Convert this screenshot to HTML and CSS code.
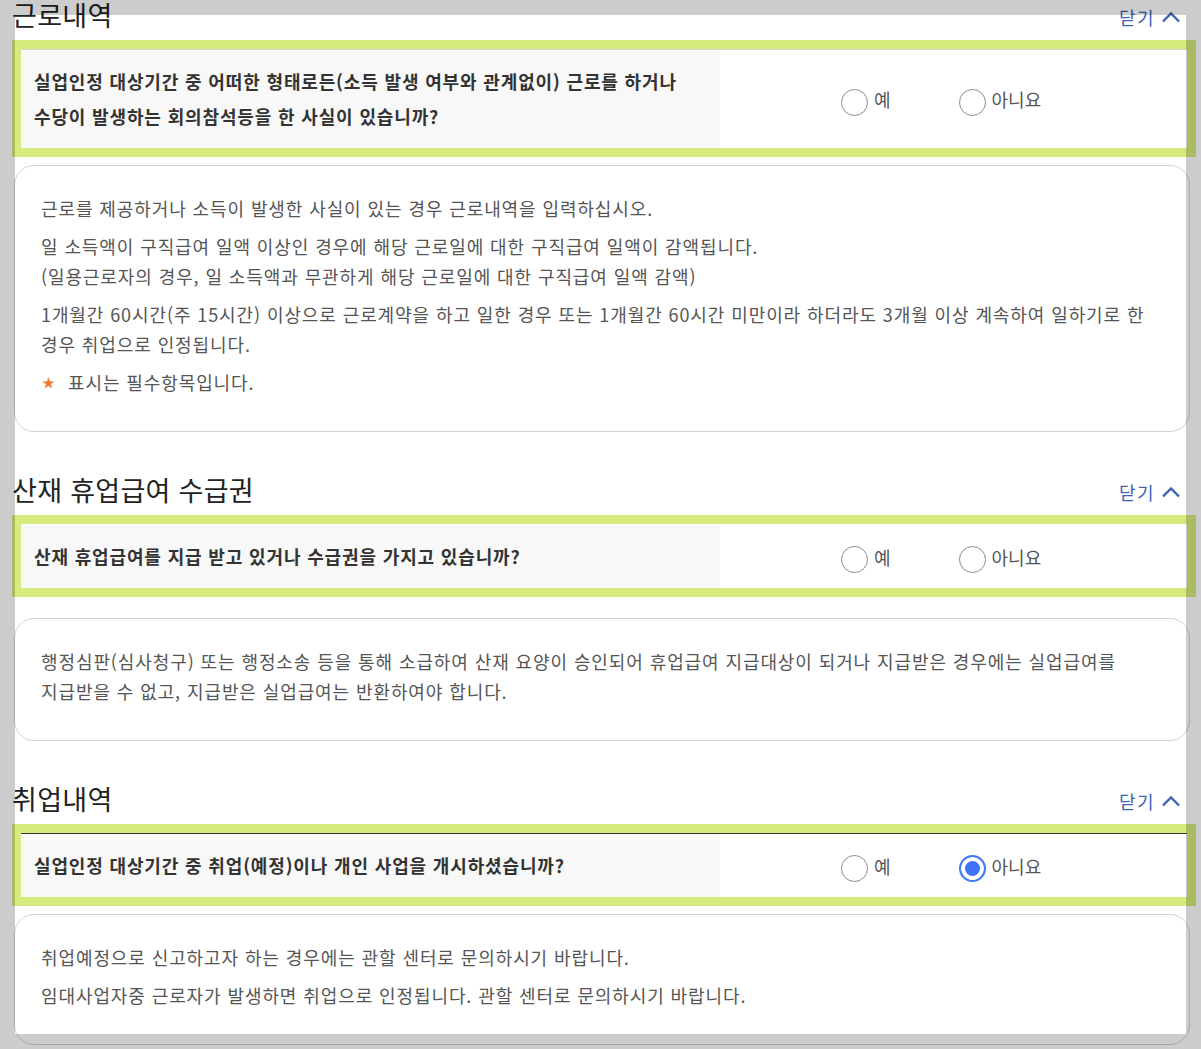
FILE: index.html
```html
<!DOCTYPE html>
<html lang="ko">
<head>
    <meta charset="UTF-8">
    <meta name="viewport" content="width=device-width, initial-scale=1.0">
    <title>실업인정 신청 - 근로내역</title>
    <link rel="stylesheet" href="styles.css">
</head>
<body>
    <div class="page">
        <section class="block">
            <div class="block-head">
                <h2 class="block-title">근로내역</h2>
                <button class="toggle" type="button">닫기
                    <svg class="toggle-icon" viewBox="0 0 20 12" width="20" height="12"><polyline points="2,10.5 10,2.5 18,10.5" /></svg>
                </button>
            </div>
            <div class="question question--line">
                <div class="question-text">실업인정 대상기간 중 어떠한 형태로든(소득 발생 여부와 관계없이) 근로를 하거나<br>수당이 발생하는 회의참석등을 한 사실이 있습니까?</div>
                <div class="question-answer">
                    <label class="radio"><input type="radio" name="work"><span>예</span></label>
                    <label class="radio"><input type="radio" name="work"><span>아니요</span></label>
                </div>
            </div>
            <div class="notice">
                <p>근로를 제공하거나 소득이 발생한 사실이 있는 경우 근로내역을 입력하십시오.</p>
                <p>일 소득액이 구직급여 일액 이상인 경우에 해당 근로일에 대한 구직급여 일액이 감액됩니다.<br>(일용근로자의 경우, 일 소득액과 무관하게 해당 근로일에 대한 구직급여 일액 감액)</p>
                <p>1개월간 60시간(주 15시간) 이상으로 근로계약을 하고 일한 경우 또는 1개월간 60시간 미만이라 하더라도 3개월 이상 계속하여 일하기로 한<br>경우 취업으로 인정됩니다.</p>
                <p><span class="star">★</span>표시는 필수항목입니다.</p>
            </div>
        </section>

        <section class="block">
            <div class="block-head">
                <h2 class="block-title">산재 휴업급여 수급권</h2>
                <button class="toggle" type="button">닫기
                    <svg class="toggle-icon" viewBox="0 0 20 12" width="20" height="12"><polyline points="2,10.5 10,2.5 18,10.5" /></svg>
                </button>
            </div>
            <div class="question question--wide-gap">
                <div class="question-text">산재 휴업급여를 지급 받고 있거나 수급권을 가지고 있습니까?</div>
                <div class="question-answer">
                    <label class="radio"><input type="radio" name="injury"><span>예</span></label>
                    <label class="radio"><input type="radio" name="injury"><span>아니요</span></label>
                </div>
            </div>
            <div class="notice">
                <p>행정심판(심사청구) 또는 행정소송 등을 통해 소급하여 산재 요양이 승인되어 휴업급여 지급대상이 되거나 지급받은 경우에는 실업급여를<br>지급받을 수 없고, 지급받은 실업급여는 반환하여야 합니다.</p>
            </div>
        </section>

        <section class="block">
            <div class="block-head">
                <h2 class="block-title">취업내역</h2>
                <button class="toggle" type="button">닫기
                    <svg class="toggle-icon" viewBox="0 0 20 12" width="20" height="12"><polyline points="2,10.5 10,2.5 18,10.5" /></svg>
                </button>
            </div>
            <div class="question question--dark">
                <div class="question-text">실업인정 대상기간 중 취업(예정)이나 개인 사업을 개시하셨습니까?</div>
                <div class="question-answer">
                    <label class="radio"><input type="radio" name="job"><span>예</span></label>
                    <label class="radio"><input type="radio" name="job" checked><span>아니요</span></label>
                </div>
            </div>
            <div class="notice">
                <p>취업예정으로 신고하고자 하는 경우에는 관할 센터로 문의하시기 바랍니다.</p>
                <p>임대사업자중 근로자가 발생하면 취업으로 인정됩니다. 관할 센터로 문의하시기 바랍니다.</p>
            </div>
        </section>
    </div>

    <div class="dim"></div>
</body>
</html>
```

FILE: styles.css
```css
html, body {
    margin: 0;
    height: 100%;
    overflow: hidden;
}

body {
    font-family: 'Noto Sans CJK KR', 'Noto Sans', sans-serif;
    background: #fff;
    color: #333;
}

.page {
    padding: 0 11px 0 14px;
}

.block + .block {
    margin-top: 43px;
}

.block-head {
    display: flex;
    justify-content: space-between;
    align-items: center;
    height: 30px;
    margin-bottom: 19px;
}

.block-title {
    margin: -1px 0 0 -2px;
    font-size: 27px;
    font-weight: 400;
    letter-spacing: 0.3px;
    line-height: 30px;
    color: #222;
}

.toggle {
    display: flex;
    align-items: center;
    gap: 6px;
    margin: 3px 9px 0 0;
    padding: 0;
    border: 0;
    background: none;
    font-family: inherit;
    font-size: 18px;
    letter-spacing: 1.5px;
    color: #3d64b4;
}

.toggle-icon {
    fill: none;
    stroke: #3d64b4;
    stroke-width: 2.4;
}

/* question row, highlighted with a green frame */
.question {
    display: flex;
    margin: 0 3px 17px 7px;
    border-top: 1px solid #fff;
    outline: 9px solid #d5eb7b;
    background: #fff;
}

.question--line {
    border-top-color: #d4d4d4;
}

.question--dark {
    border-top-color: #333;
}

.question--wide-gap {
    margin-bottom: 30px;
}

.question-text {
    width: 686px;
    padding: 14px 0 14px 13px;
    background: #f8f8f8;
    font-size: 18px;
    font-weight: 700;
    letter-spacing: 0.85px;
    line-height: 35px;
    color: #333;
}

.question-answer {
    display: flex;
    align-items: center;
    gap: 68px;
    padding-left: 121px;
}

.radio {
    display: flex;
    align-items: center;
    gap: 6px;
    font-size: 18px;
    color: #555;
}

.radio input {
    appearance: none;
    width: 27px;
    height: 27px;
    margin: 6px 0 0;
    border: 1.5px solid #8a8a8a;
    border-radius: 50%;
    background: #fff;
}

.radio input:checked {
    border: 2px solid #3f7bf2;
    background: #3f72f5;
    box-shadow: inset 0 0 0 4px #fff;
}

.notice {
    padding: 27px 26px 34px;
    border: 1px solid #d2d2d2;
    border-radius: 20px;
    font-size: 18px;
    letter-spacing: 0.9px;
    line-height: 30px;
    color: #555;
}

.notice p {
    margin: 0;
    white-space: nowrap;
}

.notice p + p {
    margin-top: 8px;
}

.star {
    display: inline-block;
    width: 26px;
    padding-left: 1px;
    font-size: 13px;
    line-height: 30px;
    vertical-align: top;
    color: #f27a26;
}

/* grey screen around the captured area */
.dim {
    position: fixed;
    left: 15px;
    top: 15px;
    width: 1171px;
    height: 1019px;
    box-shadow: 0 0 0 2000px rgba(0, 0, 0, 0.2);
    pointer-events: none;
}
```
